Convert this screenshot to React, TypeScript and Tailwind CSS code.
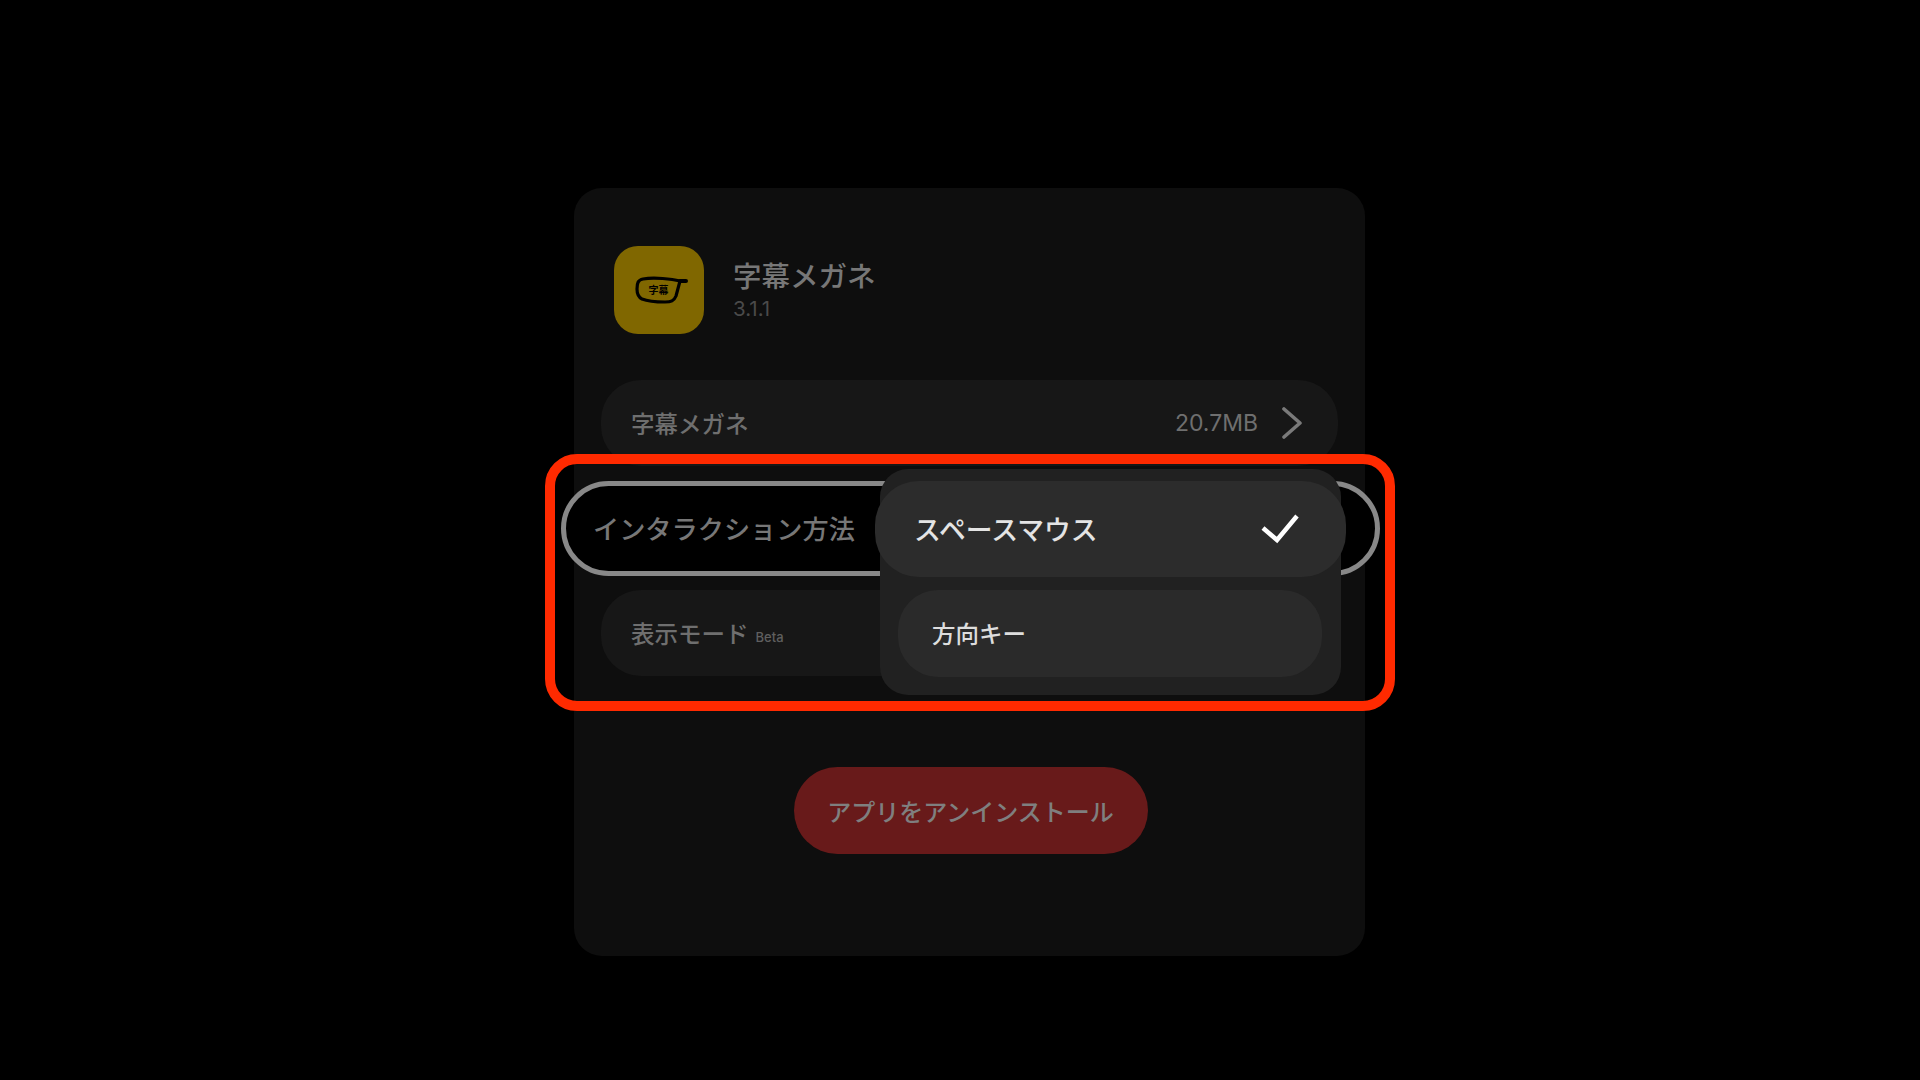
import React from 'react';

const GlassesLogo: React.FC = () => (
  <div className="relative w-[54px] h-[28px] ml-[3px]">
    <svg viewBox="0 0 54 28" className="absolute inset-0 w-full h-full" fill="none" stroke="#000000" strokeLinejoin="round" strokeLinecap="round">
      <path d="M9 3 C20 1 38 3 46 5 L42 20 C40 25 37 26 31 26 C23 26 13 25 8 23 C4 21 3 18 3 13 C3 7 4 4 9 3 Z" strokeWidth="3.2" />
      <path d="M46 5 L52 5" strokeWidth="4" />
    </svg>
    <span className="absolute left-[15px] top-[7px] text-[10px] leading-[14px] font-bold text-black whitespace-nowrap">字幕</span>
  </div>
);

export default function App() {
  return (
    <div className="min-h-screen bg-black pt-[188px] pl-[574px] font-['Noto_Sans_CJK_JP',sans-serif]">
      <div className="relative w-[791px] h-[768px] rounded-[28px] bg-[#0e0e0e] px-[27px] pt-[58px]">
        {/* header */}
        <div className="flex items-center gap-[29px] pl-[13px]">
          <div className="w-[90px] h-[88px] rounded-[24px] bg-[#806700] flex items-center justify-center">
            <GlassesLogo />
          </div>
          <div className="flex flex-col">
            <span className="text-[28.5px] leading-[36px] font-medium text-[#777777]">字幕メガネ</span>
            <span className="font-['Inter',sans-serif] text-[20.5px] leading-[28px] pt-[2px] text-[#4a4a4a]">3.1.1</span>
          </div>
        </div>

        {/* rows */}
        <div className="flex items-center justify-between h-[86px] mt-[46px] rounded-[40px] bg-[#171717] pl-[30px] pr-[36px]">
          <span className="pt-[2px] text-[23.5px] font-medium text-[#6f6f6f]">字幕メガネ</span>
          <div className="flex items-center gap-[24px]">
            <span className="font-['Inter',sans-serif] text-[23px] text-[#6f6f6f]">20.7MB</span>
            <svg viewBox="0 0 20 32" className="w-[20px] h-[32px]" fill="none" stroke="#7a7a7a" strokeWidth="3.6" strokeLinecap="round" strokeLinejoin="round">
              <path d="M2 2 L18 16 L2 30" />
            </svg>
          </div>
        </div>

        <div className="flex items-center h-[95px] mt-[15px] -ml-[40px] -mr-[42px] rounded-[48px] border-[5px] border-[#888888] bg-black pl-[27px]">
          <span className="text-[26.2px] font-medium text-[#777777]">インタラクション方法</span>
        </div>

        <div className="flex items-center h-[86px] mt-[14px] rounded-[40px] bg-[#171717] pl-[30px]">
          <span className="pt-[2px] text-[23.5px] font-medium text-[#6f6f6f]">表示モード</span>
          <span className="font-['Inter',sans-serif] ml-[7px] mt-[10px] text-[13px] font-medium text-[#5f5f5f]">Beta</span>
        </div>

        <div className="flex justify-center mt-[91px] pl-[2px]">
          <button className="w-[354px] h-[87px] rounded-[44px] bg-[#681a1a] text-[24px] font-medium text-[#7f7f7f]">
            アプリをアンインストール
          </button>
        </div>

        {/* dropdown */}
        <div className="absolute left-[306px] top-[281px] w-[461px] h-[226px] rounded-[28px] bg-[#212121] pt-[12px] pb-[18px] flex flex-col gap-[13px]">
          <div className="flex items-center justify-between h-[96px] -ml-[5px] -mr-[5px] rounded-[44px] bg-[#2c2c2c] pl-[39px] pr-[47px]">
            <span className="text-[26.8px] font-medium text-[#e4e4e4]">スペースマウス</span>
            <svg viewBox="0 0 38 32" className="w-[38px] h-[32px]" fill="none" stroke="#ffffff" strokeWidth="4.5">
              <path d="M2 15 L16 27 L36 3" />
            </svg>
          </div>
          <div className="flex items-center h-[87px] ml-[18px] mr-[19px] rounded-[40px] bg-[#2a2a2a] pl-[34px]">
            <span className="text-[23.5px] font-medium text-[#dddddd]">方向キー</span>
          </div>
        </div>

        {/* annotation */}
        <div className="absolute left-[-29px] top-[266px] w-[850px] h-[257px] rounded-[32px] border-[10px] border-[#ff2a00] pointer-events-none" />
      </div>
    </div>
  );
}
